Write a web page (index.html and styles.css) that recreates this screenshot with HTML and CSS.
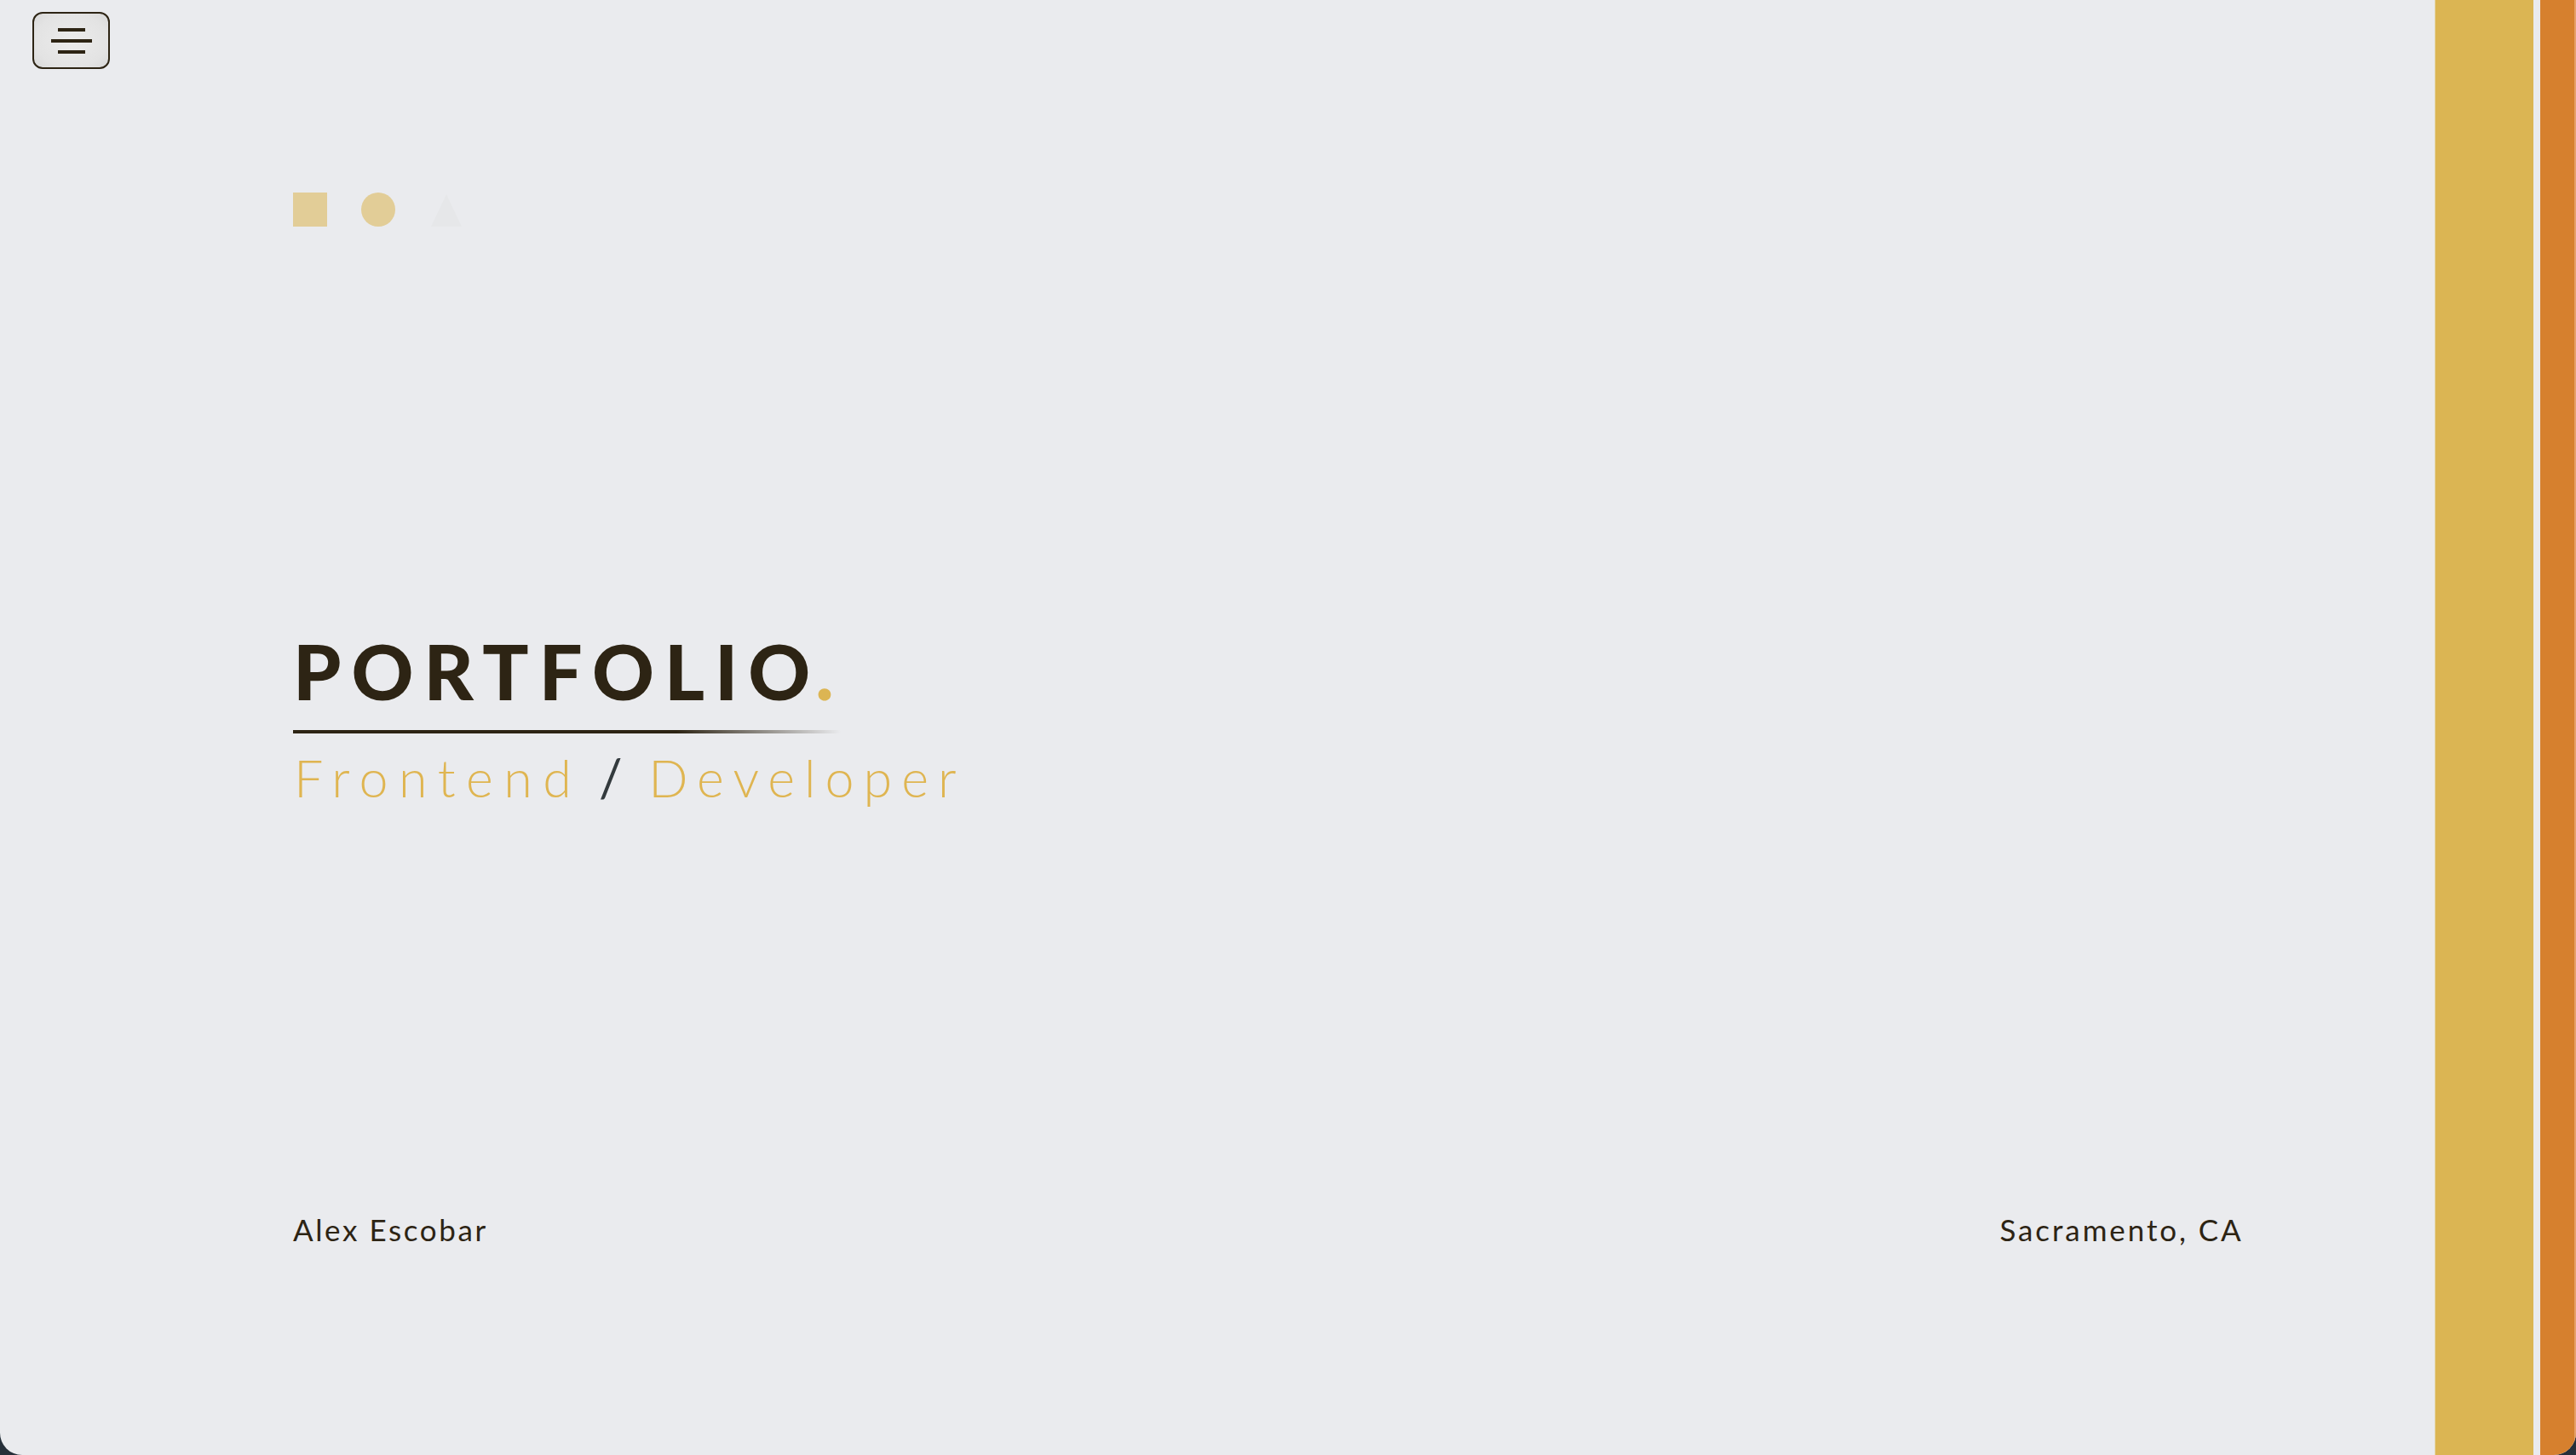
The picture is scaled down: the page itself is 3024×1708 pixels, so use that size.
FILE: index.html
```html
<!DOCTYPE html>
<html lang="en">
<head>
<meta charset="utf-8">
<title>Portfolio</title>
<link rel="stylesheet" href="styles.css">
</head>
<body>
<div class="page">
  <button class="menu" aria-label="Menu">
    <span class="bar bar-short"></span>
    <span class="bar bar-long"></span>
    <span class="bar bar-short"></span>
  </button>
  <main class="hero">
    <div class="shapes">
      <span class="shape square"></span>
      <span class="shape circle"></span>
      <svg class="shape triangle" viewBox="0 0 40 40" width="40" height="40"><polygon points="20,2 38,40 2,40" fill="#e6e7e9"/></svg>
    </div>
    <div class="title-block">
      <h1 class="title">PORTFOLIO<span class="dot">.</span></h1>
      <div class="underline"></div>
      <p class="subtitle"><span class="word-a">Frontend</span> <span class="slash">/</span> Developer</p>
    </div>
    <footer class="footer">
      <span class="name">Alex Escobar</span>
      <span class="location">Sacramento, CA</span>
    </footer>
  </main>
  <div class="stripe stripe-yellow"></div>
  <div class="stripe-gap"></div>
  <div class="stripe stripe-orange"></div>
</div>
</body>
</html>
```
FILE: styles.css
```css
html, body {
  margin: 0;
  padding: 0;
  background: #26303a;
}
.page {
  position: relative;
  display: flex;
  width: 3024px;
  height: 1708px;
  background: #eaebee;
  border-radius: 0 0 26px 26px;
  overflow: hidden;
  font-family: "Lato", "Open Sans", sans-serif;
  color: #2d2414;
}
.menu {
  position: absolute;
  left: 38px;
  top: 14px;
  width: 91px;
  height: 67px;
  box-sizing: border-box;
  border: 2px solid #2d2414;
  border-radius: 12px;
  background: radial-gradient(ellipse at center, #ececec 0%, #e3e3e3 70%, #d8d8d8 100%);
  padding: 0;
  display: flex;
  flex-direction: column;
  align-items: center;
  justify-content: center;
  gap: 9px;
}
.bar {
  display: block;
  height: 4px;
  background: #2d2414;
}
.bar-short { width: 32px; }
.bar-long { width: 48px; }
.hero {
  flex: 1;
  display: flex;
  flex-direction: column;
  padding: 226px 227px 247px 344px;
  box-sizing: border-box;
  height: 1708px;
}
.shapes {
  display: flex;
  gap: 40px;
  height: 40px;
}
.shape {
  display: block;
  width: 40px;
  height: 40px;
}
.square { background: #e2cd97; }
.circle { background: #e2cd97; border-radius: 50%; }
.title-block {
  margin-top: 476px;
}
.title {
  margin: 0;
  font-size: 90px;
  line-height: 90px;
  font-weight: 900;
  letter-spacing: 12px;
  color: #2d2414;
}
.dot {
  color: #dcb553;
  letter-spacing: 0;
  margin-left: -6px;
}
.underline {
  margin-top: 25px;
  width: 643px;
  height: 4px;
  background: linear-gradient(to right, #2d2414 0%, #2d2414 70%, rgba(45, 36, 20, 0) 100%);
}
.subtitle {
  margin: 21px 0 0 1px;
  font-size: 61px;
  line-height: 61px;
  font-weight: 300;
  letter-spacing: 11px;
  word-spacing: -8px;
  color: #dfb551;
}
.word-a {
  letter-spacing: 12.5px;
}
.slash {
  color: #333a3d;
  font-weight: 400;
}
.footer {
  margin-top: auto;
  display: flex;
  justify-content: space-between;
  font-size: 35px;
  line-height: 35px;
  letter-spacing: 2.6px;
  color: #2d2414;
}
.location {
  margin-right: -2.6px;
  letter-spacing: 2.9px;
}
.stripe {
  height: 100%;
}
.stripe-yellow {
  width: 115px;
  background: #dbb553;
  border-left: 1px solid #e4d6a8;
}
.stripe-gap {
  width: 8px;
}
.stripe-orange {
  width: 40px;
  background: #d6802e;
  border-right: 2px solid #e6a068;
}
```
